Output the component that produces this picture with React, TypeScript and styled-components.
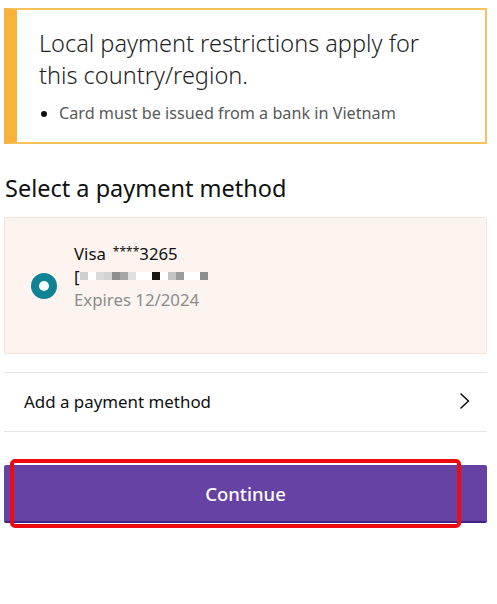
import React from "react";
import styled, { createGlobalStyle } from "styled-components";

const GlobalStyle = createGlobalStyle`
  html, body {
    margin: 0;
    padding: 0;
    background: #ffffff;
  }
  body {
    font-family: "Noto Sans", "Liberation Sans", sans-serif;
    color: #0f1111;
  }
`;

const Page = styled.div`
  width: 497px;
  height: 604px;
  box-sizing: border-box;
  padding: 8px 10px 0 4px;
  overflow: hidden;
`;

const Alert = styled.div`
  border: 2px solid #f7c25e;
  border-left: 13px solid #f6b23c;
  padding: 17px 20px 18px 22px;
  background: #fff;
`;

const AlertTitle = styled.div`
  max-width: 400px;
  font-size: 23.5px;
  line-height: 32px;
  font-weight: 300;
  color: #1f1f1f;
`;

const BulletList = styled.ul`
  margin: 11px 0 0 0;
  padding-left: 20px;
  font-size: 16.2px;
  line-height: 22px;
  color: #565959;
  li::marker {
    color: #0f1111;
  }
`;

const Heading = styled.h2`
  margin: 29px 0 14px 1px;
  font-size: 23.5px;
  line-height: 30px;
  font-weight: 400;
  color: #0f1111;
`;

const Card = styled.div`
  height: 137px;
  box-sizing: border-box;
  background: #fdf4ef;
  border: 1px solid #f3e3d9;
  border-radius: 2px;
  display: flex;
  align-items: center;
`;

const Radio = styled.span`
  width: 26px;
  height: 26px;
  margin: 0 17px 0 26px;
  border-radius: 50%;
  background: #0f8294;
  display: flex;
  align-items: center;
  justify-content: center;
  flex-shrink: 0;
  &::after {
    content: "";
    width: 10px;
    height: 10px;
    border-radius: 50%;
    background: #f4fbfc;
  }
`;

const CardText = styled.div`
  display: flex;
  flex-direction: column;
  margin-bottom: 21px;
`;

const CardLine = styled.div<{ $muted?: boolean }>`
  font-size: 16.8px;
  line-height: 23px;
  color: ${(p) => (p.$muted ? "#8a8c8c" : "#0f1111")};
`;

const Stars = styled.span`
  font-size: 12px;
  vertical-align: 4px;
  margin-left: 7px;
`;

const Mosaic = styled.div`
  height: 23px;
  display: flex;
  align-items: center;
`;

const Pixel = styled.span<{ $shade: string }>`
  width: 8px;
  height: 8px;
  background: ${(p) => p.$shade};
`;

const Divider = styled.div`
  height: 1px;
  background: #e3e6e6;
`;

const LinkRow = styled.div`
  margin-top: 18px;
  height: 59px;
  display: flex;
  align-items: center;
  justify-content: space-between;
  padding: 0 16px 2px 20px;
  border-top: 1px solid #e3e6e6;
  font-size: 16.9px;
  color: #0f1111;
  box-sizing: border-box;
`;

const ButtonWrap = styled.div`
  position: relative;
  margin-top: 33px;
`;

const ContinueButton = styled.button`
  width: 100%;
  height: 58px;
  border: none;
  border-bottom: 2px solid #3f2387;
  border-radius: 2px;
  background: #6742a5;
  color: #fff;
  font-family: "Noto Sans", "Liberation Sans", sans-serif;
  font-size: 18.5px;
  font-weight: 500;
  padding: 0;
  cursor: pointer;
`;

const Highlight = styled.span`
  position: absolute;
  left: 6px;
  top: -6px;
  width: 451px;
  height: 69px;
  box-sizing: border-box;
  border: 4px solid #ee0a0e;
  border-radius: 5px;
  pointer-events: none;
`;

const mosaic: string[] = [
  "#cfcfcf", "#ffffff", "#dadada", "#d2d2d2", "#8e8e8e", "#a6a6a6", "#e0e0e0", "#ffffff",
  "#ffffff", "#1a1612", "#ffffff", "#c4c4c4", "#9c9c9c", "#ffffff", "#ffffff", "#8c8c8c",
];

const Chevron = () => (
  <svg width="12" height="18" viewBox="0 0 12 18" fill="none">
    <path d="M2 2 L9.5 9 L2 16" stroke="#111" strokeWidth="1.6" strokeLinecap="round" strokeLinejoin="round" />
  </svg>
);

export default function App() {
  return (
    <Page>
      <GlobalStyle />
      <Alert>
        <AlertTitle>Local payment restrictions apply for this country/region.</AlertTitle>
        <BulletList>
          <li>Card must be issued from a bank in Vietnam</li>
        </BulletList>
      </Alert>

      <Heading>Select a payment method</Heading>

      <Card>
        <Radio />
        <CardText>
          <CardLine>
            Visa<Stars>****</Stars>3265
          </CardLine>
          <Mosaic>
            <CardLine>[</CardLine>
            {mosaic.map((c, i) => (
              <Pixel key={i} $shade={c} />
            ))}
          </Mosaic>
          <CardLine $muted>Expires 12/2024</CardLine>
        </CardText>
      </Card>

      <LinkRow>
        <span>Add a payment method</span>
        <Chevron />
      </LinkRow>
      <Divider />

      <ButtonWrap>
        <ContinueButton>Continue</ContinueButton>
        <Highlight />
      </ButtonWrap>
    </Page>
  );
}
